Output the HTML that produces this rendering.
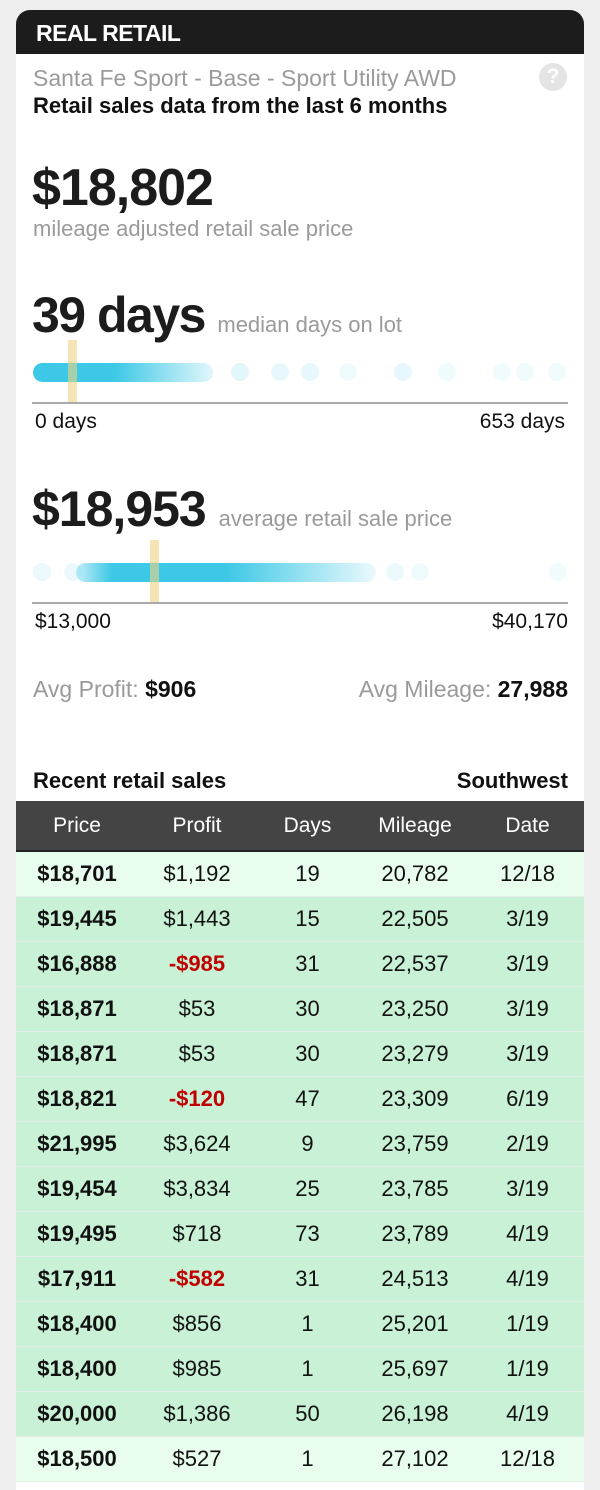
<!DOCTYPE html>
<html><head><style>
*{margin:0;padding:0;box-sizing:border-box}
body{width:600px;height:1474px;background:#efefef;font-family:"Liberation Sans",sans-serif;overflow:hidden;position:relative}
.card{position:absolute;left:16px;top:10px;width:568px;height:1480px;background:#fff;border-radius:14px 14px 0 0;overflow:hidden}
.hd{height:44px;background:#1c1c1c;color:#fff;font-weight:bold;font-size:23px;padding:10px 0 0 20px;letter-spacing:-0.5px}
.a{position:absolute;white-space:nowrap}
.g{color:#9a9a9a}
.dot{position:absolute;border-radius:50%;background:#3cc8e6;width:18px;height:18px}
table{position:absolute;left:0;top:791px;width:568px;border-collapse:collapse;table-layout:fixed}
th{background:#444;color:#fff;font-weight:normal;font-size:21px;height:50px;border-bottom:2px solid #222}
td{height:45px;text-align:center;font-size:22px;color:#111;border-bottom:1px solid #e4ece6;background:#c9f1d6}
tr.l td{background:#e8fdee}
td:first-child{font-weight:bold}
.r{color:#c00000;font-weight:bold}
</style></head><body>
<div class="card">
<div class="hd">REAL RETAIL</div>
<div class="a g" style="left:17px;top:55px;font-size:23px">Santa Fe Sport - Base - Sport Utility AWD</div>
<div class="a" style="left:523px;top:53px;width:28px;height:28px;border-radius:50%;background:#e4e4e4;color:#fff;font-weight:bold;font-size:21px;text-align:center;line-height:28px">?</div>
<div class="a" style="left:17px;top:83px;font-size:22px;color:#111;font-weight:bold;-webkit-text-stroke:0">Retail sales data from the last 6 months</div>
<div class="a" style="left:16px;top:148px;font-size:52px;font-weight:bold;color:#1c1c1c;letter-spacing:-1px">$18,802</div>
<div class="a g" style="left:17px;top:206px;font-size:22px">mileage adjusted retail sale price</div>
<div class="a" style="left:16px;top:276px;font-size:50px;font-weight:bold;color:#1c1c1c;letter-spacing:-1.5px">39 days <span style="font-size:22px;font-weight:normal;color:#9a9a9a;letter-spacing:0">median days on lot</span></div>
<div class="a" style="left:17px;top:353px;width:180px;height:19px;border-radius:10px;background:linear-gradient(90deg,#3cc8e6 45%,rgba(60,200,230,0.15))"></div>
<div class="dot" style="left:215px;top:353px;opacity:.15"></div><div class="dot" style="left:255px;top:353px;opacity:.12"></div><div class="dot" style="left:285px;top:353px;opacity:.12"></div><div class="dot" style="left:323px;top:353px;opacity:.08"></div><div class="dot" style="left:378px;top:353px;opacity:.12"></div><div class="dot" style="left:422px;top:353px;opacity:.08"></div><div class="dot" style="left:477px;top:353px;opacity:.08"></div><div class="dot" style="left:500px;top:353px;opacity:.08"></div><div class="dot" style="left:532px;top:353px;opacity:.08"></div>
<div class="a" style="left:52px;top:330px;width:9px;height:63px;background:rgba(240,210,130,.6)"></div>
<div class="a" style="left:16px;top:392px;width:536px;height:2px;background:#aaa"></div>
<div class="a" style="left:19px;top:400px;font-size:21px;color:#111">0 days</div>
<div class="a" style="right:19px;top:400px;font-size:21px;color:#111">653 days</div>
<div class="a" style="left:16px;top:470px;font-size:50px;font-weight:bold;color:#1c1c1c;letter-spacing:-1px">$18,953 <span style="font-size:22px;font-weight:normal;color:#9a9a9a;letter-spacing:0">average retail sale price</span></div>
<div class="dot" style="left:17px;top:553px;opacity:.1"></div><div class="dot" style="left:48px;top:553px;opacity:.1"></div>
<div class="a" style="left:60px;top:553px;width:300px;height:19px;border-radius:10px;background:linear-gradient(90deg,rgba(60,200,230,.3),#3cc8e6 12%,#3cc8e6 50%,rgba(60,200,230,.1))"></div>
<div class="dot" style="left:370px;top:553px;opacity:.1"></div><div class="dot" style="left:395px;top:553px;opacity:.08"></div><div class="dot" style="left:533px;top:553px;opacity:.08"></div>
<div class="a" style="left:134px;top:530px;width:9px;height:63px;background:rgba(240,210,130,.6)"></div>
<div class="a" style="left:16px;top:592px;width:536px;height:2px;background:#aaa"></div>
<div class="a" style="left:19px;top:600px;font-size:21px;color:#111">$13,000</div>
<div class="a" style="right:16px;top:600px;font-size:21px;color:#111">$40,170</div>
<div class="a g" style="left:17px;top:666px;font-size:23px">Avg Profit: <b style="color:#111">$906</b></div>
<div class="a g" style="right:16px;top:666px;font-size:23px">Avg Mileage: <b style="color:#111">27,988</b></div>
<div class="a" style="left:17px;top:758px;font-size:22px;color:#111;font-weight:bold">Recent retail sales</div>
<div class="a" style="right:16px;top:758px;font-size:22px;color:#111;font-weight:bold">Southwest</div>
<table>
<colgroup><col style="width:122px"><col style="width:118px"><col style="width:103px"><col style="width:112px"><col style="width:113px"></colgroup>
<tr><th>Price</th><th>Profit</th><th>Days</th><th>Mileage</th><th>Date</th></tr>
<tr class="l"><td>$18,701</td><td>$1,192</td><td>19</td><td>20,782</td><td>12/18</td></tr>
<tr><td>$19,445</td><td>$1,443</td><td>15</td><td>22,505</td><td>3/19</td></tr>
<tr><td>$16,888</td><td class="r">-$985</td><td>31</td><td>22,537</td><td>3/19</td></tr>
<tr><td>$18,871</td><td>$53</td><td>30</td><td>23,250</td><td>3/19</td></tr>
<tr><td>$18,871</td><td>$53</td><td>30</td><td>23,279</td><td>3/19</td></tr>
<tr><td>$18,821</td><td class="r">-$120</td><td>47</td><td>23,309</td><td>6/19</td></tr>
<tr><td>$21,995</td><td>$3,624</td><td>9</td><td>23,759</td><td>2/19</td></tr>
<tr><td>$19,454</td><td>$3,834</td><td>25</td><td>23,785</td><td>3/19</td></tr>
<tr><td>$19,495</td><td>$718</td><td>73</td><td>23,789</td><td>4/19</td></tr>
<tr><td>$17,911</td><td class="r">-$582</td><td>31</td><td>24,513</td><td>4/19</td></tr>
<tr><td>$18,400</td><td>$856</td><td>1</td><td>25,201</td><td>1/19</td></tr>
<tr><td>$18,400</td><td>$985</td><td>1</td><td>25,697</td><td>1/19</td></tr>
<tr><td>$20,000</td><td>$1,386</td><td>50</td><td>26,198</td><td>4/19</td></tr>
<tr class="l"><td>$18,500</td><td>$527</td><td>1</td><td>27,102</td><td>12/18</td></tr>
</table>
</div>
</body></html>
